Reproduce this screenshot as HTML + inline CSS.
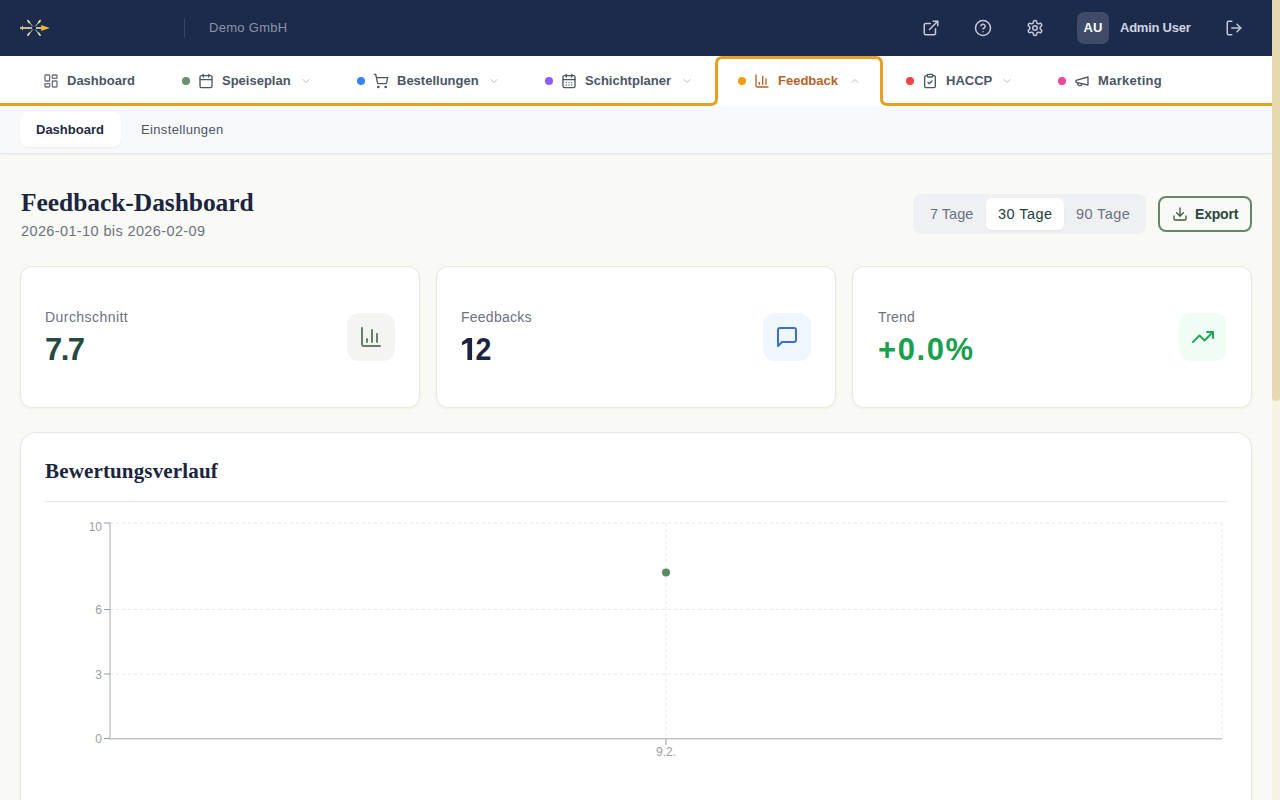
<!DOCTYPE html>
<html lang="de">
<head>
<meta charset="utf-8">
<title>Feedback-Dashboard</title>
<style>
*{box-sizing:border-box;margin:0;padding:0}
html,body{width:1280px;height:800px;overflow:hidden}
body{font-family:"Liberation Sans",sans-serif;background:#f9f9f5;position:relative;color:#1c2540}
.a{position:absolute;white-space:nowrap;line-height:1}
svg{display:block}
#hdr{position:absolute;left:0;top:0;width:1272px;height:56px;background:#1c2a4b}
#nav{position:absolute;left:0;top:56px;width:1272px;height:50px;background:#fff}
#sub{position:absolute;left:0;top:106px;width:1272px;height:48px;background:#f8f9fa;border-bottom:1px solid #e5e7eb;box-shadow:0 1px 3px rgba(0,0,0,0.03)}
.ntxt{font-size:13px;font-weight:700;color:#4b5563}
.dot{position:absolute;width:8px;height:8px;border-radius:50%;top:77px}
.ico{position:absolute;fill:none;stroke-width:2;stroke-linecap:round;stroke-linejoin:round}
.card{position:absolute;top:266px;width:400px;height:142px;background:#fff;border:1px solid #e8e8e1;border-radius:12px;box-shadow:0 1px 3px rgba(40,40,20,0.05)}
.lbl{font-size:14px;color:#6b7280}
.val{font-size:30px;font-weight:700}
.ibox{position:absolute;width:48px;height:48px;border-radius:12px;top:313px}
#scroll{position:absolute;left:1272px;top:0;width:8px;height:800px;background:#f7f2e4}
#thumb{position:absolute;left:1272px;top:0;width:8px;height:401px;background:#e6d9ad;border-radius:0 0 4px 4px}
</style>
</head>
<body>

<!-- HEADER -->
<div id="hdr"></div>
<svg class="a" style="left:16px;top:14px" width="40" height="28" viewBox="16 14 40 28">
  <g stroke="#bfba9c" stroke-width="2" fill="none">
    <line x1="20" y1="28" x2="32" y2="28"/>
    <line x1="36" y1="28" x2="43" y2="28"/>
  </g>
  <g stroke="#c9cba0" stroke-width="1" stroke-linecap="round">
    <line x1="28" y1="20.5" x2="32.4" y2="26"/>
    <line x1="40" y1="20.5" x2="35.6" y2="26"/>
    <line x1="28" y1="35.5" x2="32.4" y2="29.8"/>
    <line x1="40" y1="35.5" x2="35.6" y2="29.8"/>
  </g>
  <g fill="#dadfac">
    <ellipse cx="28.6" cy="21.6" rx="0.9" ry="2.2" transform="rotate(-38 28.6 21.6)"/>
    <ellipse cx="39.4" cy="21.6" rx="0.9" ry="2.2" transform="rotate(38 39.4 21.6)"/>
    <ellipse cx="28.6" cy="34.2" rx="0.9" ry="2.2" transform="rotate(38 28.6 34.2)"/>
    <ellipse cx="39.4" cy="34.2" rx="0.9" ry="2.2" transform="rotate(-38 39.4 34.2)"/>
  </g>
  <path d="M22.5 25.2 L23.6 28 L22.5 30.8 L21.4 28 Z" fill="#d6c46e"/>
  <path d="M41.2 25 L49.8 28 L41.2 31.1 Z" fill="#e6b83c"/>
</svg>
<div class="a" style="left:184px;top:18px;width:1px;height:20px;background:#3a4666"></div>
<div class="a" style="left:209px;top:21px;font-size:13px;letter-spacing:0.3px;color:#8b94a9">Demo GmbH</div>

<!-- header icons -->
<svg class="ico" style="left:922px;top:19px" width="18" height="18" viewBox="0 0 24 24" stroke="#c3c9d6"><path d="M15 3h6v6"/><path d="M10 14 21 3"/><path d="M18 13v6a2 2 0 0 1-2 2H5a2 2 0 0 1-2-2V8a2 2 0 0 1 2-2h6"/></svg>
<svg class="ico" style="left:974px;top:19px" width="18" height="18" viewBox="0 0 24 24" stroke="#c3c9d6"><circle cx="12" cy="12" r="10"/><path d="M9.09 9a3 3 0 0 1 5.83 1c0 2-3 3-3 3"/><path d="M12 17h.01"/></svg>
<svg class="ico" style="left:1026px;top:19px" width="18" height="18" viewBox="0 0 24 24" stroke="#c3c9d6"><path d="M12.22 2h-.44a2 2 0 0 0-2 2v.18a2 2 0 0 1-1 1.73l-.43.25a2 2 0 0 1-2 0l-.15-.08a2 2 0 0 0-2.73.73l-.22.38a2 2 0 0 0 .73 2.73l.15.1a2 2 0 0 1 1 1.72v.51a2 2 0 0 1-1 1.74l-.15.09a2 2 0 0 0-.73 2.73l.22.38a2 2 0 0 0 2.73.73l.15-.08a2 2 0 0 1 2 0l.43.25a2 2 0 0 1 1 1.73V20a2 2 0 0 0 2 2h.44a2 2 0 0 0 2-2v-.18a2 2 0 0 1 1-1.73l.43-.25a2 2 0 0 1 2 0l.15.08a2 2 0 0 0 2.73-.73l.22-.39a2 2 0 0 0-.73-2.73l-.15-.08a2 2 0 0 1-1-1.74v-.5a2 2 0 0 1 1-1.74l.15-.09a2 2 0 0 0 .73-2.73l-.22-.38a2 2 0 0 0-2.73-.73l-.15.08a2 2 0 0 1-2 0l-.43-.25a2 2 0 0 1-1-1.73V4a2 2 0 0 0-2-2z"/><circle cx="12" cy="12" r="3"/></svg>
<div class="a" style="left:1077px;top:12px;width:32px;height:32px;border-radius:7px;background:#3f4b69"></div>
<div class="a" style="left:1077px;top:21px;width:32px;text-align:center;font-size:13px;font-weight:700;color:#fff">AU</div>
<div class="a" style="left:1120px;top:21px;font-size:13px;font-weight:700;letter-spacing:-0.25px;color:#d0d5e0">Admin User</div>
<svg class="ico" style="left:1225px;top:19px" width="18" height="18" viewBox="0 0 24 24" stroke="#c3c9d6"><path d="M9 21H5a2 2 0 0 1-2-2V5a2 2 0 0 1 2-2h4"/><polyline points="16 17 21 12 16 7"/><line x1="21" x2="9" y1="12" y2="12"/></svg>

<!-- NAV -->
<div id="nav"></div>
<svg class="a" style="left:0;top:54px" width="1272" height="54" viewBox="0 54 1272 54">
  <path d="M0 104.5 H710.5 Q716.5 104.5 716.5 98.5 V63.5 Q716.5 57.5 722.5 57.5 H875.5 Q881.5 57.5 881.5 63.5 V98.5 Q881.5 104.5 887.5 104.5 H1272" fill="none" stroke="#e8a020" stroke-width="3"/>
</svg>

<svg class="ico" style="left:43px;top:73px" width="16" height="16" viewBox="0 0 24 24" stroke="#6b7280"><rect width="7" height="9" x="3" y="3" rx="1"/><rect width="7" height="5" x="14" y="3" rx="1"/><rect width="7" height="9" x="14" y="12" rx="1"/><rect width="7" height="5" x="3" y="16" rx="1"/></svg>
<div class="a ntxt" style="left:67px;top:74px">Dashboard</div>

<div class="dot" style="left:182px;background:#6a8f6e"></div>
<svg class="ico" style="left:198px;top:73px" width="16" height="16" viewBox="0 0 24 24" stroke="#4b5563"><rect width="18" height="18" x="3" y="4" rx="2"/><path d="M16 2v4"/><path d="M8 2v4"/><path d="M3 10h18"/></svg>
<div class="a ntxt" style="left:222px;top:74px">Speiseplan</div>
<svg class="ico" style="left:300px;top:75px" width="12" height="12" viewBox="0 0 24 24" stroke="#b4b9c2"><path d="m6 9 6 6 6-6"/></svg>

<div class="dot" style="left:357px;background:#3b82f6"></div>
<svg class="ico" style="left:373px;top:73px" width="16" height="16" viewBox="0 0 24 24" stroke="#4b5563"><circle cx="8" cy="21" r="1"/><circle cx="19" cy="21" r="1"/><path d="M2.05 2.05h2l2.66 12.42a2 2 0 0 0 2 1.58h9.78a2 2 0 0 0 1.95-1.57l1.65-7.43H5.12"/></svg>
<div class="a ntxt" style="left:397px;top:74px">Bestellungen</div>
<svg class="ico" style="left:488px;top:75px" width="12" height="12" viewBox="0 0 24 24" stroke="#b4b9c2"><path d="m6 9 6 6 6-6"/></svg>

<div class="dot" style="left:545px;background:#8b5cf6"></div>
<svg class="ico" style="left:561px;top:73px" width="16" height="16" viewBox="0 0 24 24" stroke="#4b5563"><rect width="18" height="18" x="3" y="4" rx="2"/><path d="M16 2v4"/><path d="M8 2v4"/><path d="M3 10h18"/><path d="M8 14h.01"/><path d="M12 14h.01"/><path d="M16 14h.01"/><path d="M8 18h.01"/><path d="M12 18h.01"/><path d="M16 18h.01"/></svg>
<div class="a ntxt" style="left:585px;top:74px">Schichtplaner</div>
<svg class="ico" style="left:681px;top:75px" width="12" height="12" viewBox="0 0 24 24" stroke="#b4b9c2"><path d="m6 9 6 6 6-6"/></svg>

<div class="dot" style="left:738px;background:#f59e0b"></div>
<svg class="ico" style="left:754px;top:73px" width="16" height="16" viewBox="0 0 24 24" stroke="#b4622a"><path d="M3 3v16a2 2 0 0 0 2 2h16"/><path d="M18 17V9"/><path d="M13 17V5"/><path d="M8 17v-3"/></svg>
<div class="a ntxt" style="left:778px;top:74px;color:#b4622a">Feedback</div>
<svg class="ico" style="left:849px;top:75px" width="12" height="12" viewBox="0 0 24 24" stroke="#b4b9c2"><path d="m18 15-6-6-6 6"/></svg>

<div class="dot" style="left:906px;background:#ef4444"></div>
<svg class="ico" style="left:922px;top:73px" width="16" height="16" viewBox="0 0 24 24" stroke="#4b5563"><rect width="8" height="4" x="8" y="2" rx="1" ry="1"/><path d="M16 4h2a2 2 0 0 1 2 2v14a2 2 0 0 1-2 2H6a2 2 0 0 1-2-2V6a2 2 0 0 1 2-2h2"/><path d="m9 14 2 2 4-4"/></svg>
<div class="a ntxt" style="left:946px;top:74px">HACCP</div>
<svg class="ico" style="left:1001px;top:75px" width="12" height="12" viewBox="0 0 24 24" stroke="#b4b9c2"><path d="m6 9 6 6 6-6"/></svg>

<div class="dot" style="left:1058px;background:#ec4899"></div>
<svg class="ico" style="left:1074px;top:73px" width="16" height="16" viewBox="0 0 24 24" stroke="#4b5563"><path d="m3 11 18-5v12L3 14v-3z"/><path d="M11.6 16.8a3 3 0 1 1-5.8-1.6"/></svg>
<div class="a ntxt" style="left:1098px;top:74px;letter-spacing:0.3px">Marketing</div>

<!-- SUBNAV -->
<div id="sub"></div>
<div class="a" style="left:20px;top:112px;width:101px;height:35px;background:#fff;border-radius:8px;box-shadow:0 1px 2px rgba(0,0,0,0.05)"></div>
<div class="a" style="left:36px;top:123px;font-size:13px;font-weight:700;color:#1f2a44">Dashboard</div>
<div class="a" style="left:141px;top:123px;font-size:13px;letter-spacing:0.35px;color:#4b5563">Einstellungen</div>

<!-- TITLE -->
<div class="a" style="left:21px;top:190px;font-family:'Liberation Serif',serif;font-weight:700;font-size:25.5px;letter-spacing:-0.06px;color:#1c2540">Feedback-Dashboard</div>
<div class="a" style="left:21px;top:224px;font-size:14.5px;letter-spacing:0.38px;color:#6b7280">2026-01-10 bis 2026-02-09</div>

<!-- segmented -->
<div class="a" style="left:913px;top:194px;width:233px;height:40px;background:#eef0f3;border-radius:8px"></div>
<div class="a" style="left:986px;top:198px;width:78px;height:32px;background:#fff;border-radius:6px;box-shadow:0 1px 2px rgba(0,0,0,0.06)"></div>
<div class="a" style="left:930px;top:207px;font-size:14.5px;color:#6b7280">7 Tage</div>
<div class="a" style="left:998px;top:207px;font-size:14.5px;font-weight:400;letter-spacing:0.45px;color:#22403a">30 Tage</div>
<div class="a" style="left:1076px;top:207px;font-size:14.5px;letter-spacing:0.4px;color:#6b7280">90 Tage</div>

<!-- export -->
<div class="a" style="left:1158px;top:196px;width:94px;height:36px;border:2px solid #67876b;border-radius:8px"></div>
<svg class="ico" style="left:1172px;top:206px" width="16" height="16" viewBox="0 0 24 24" stroke="#3b5443"><path d="M21 15v4a2 2 0 0 1-2 2H5a2 2 0 0 1-2-2v-4"/><polyline points="7 10 12 15 17 10"/><line x1="12" x2="12" y1="15" y2="3"/></svg>
<div class="a" style="left:1195px;top:207px;font-size:14px;font-weight:700;letter-spacing:-0.2px;color:#2a4741">Export</div>

<!-- CARDS -->
<div class="card" style="left:20px"></div>
<div class="a lbl" style="left:45px;top:310px;letter-spacing:0.45px">Durchschnitt</div>
<div class="a val" style="left:45px;top:334px;font-size:31px;letter-spacing:-1.6px;color:#264a3f">7.7</div>
<div class="ibox" style="left:347px;background:#f4f5f2"></div>
<svg class="ico" style="left:359px;top:325px" width="24" height="24" viewBox="0 0 24 24" stroke="#667e6a"><path d="M3 3v16a2 2 0 0 0 2 2h16"/><path d="M18 17V9"/><path d="M13 17V5"/><path d="M8 17v-3"/></svg>

<div class="card" style="left:436px"></div>
<div class="a lbl" style="left:461px;top:310px;letter-spacing:0.25px">Feedbacks</div>
<svg class="a" style="left:458px;top:334px" width="20" height="30" viewBox="458 334 20 30"><path d="M467.4 338.1 H472.1 V359.9 H467.4 V342.8 L462 345.3 V341.9 Z" fill="#1c2540"/></svg>
<div class="a val" style="left:474px;top:334px;font-size:31px;color:#1c2540;transform:scaleX(0.92);transform-origin:right center">2</div>
<div class="ibox" style="left:763px;background:#eff6ff"></div>
<svg class="ico" style="left:775px;top:325px" width="24" height="24" viewBox="0 0 24 24" stroke="#3a6fd0"><path d="M21 15a2 2 0 0 1-2 2H7l-4 4V5a2 2 0 0 1 2-2h14a2 2 0 0 1 2 2z"/></svg>

<div class="card" style="left:852px"></div>
<div class="a lbl" style="left:878px;top:310px;letter-spacing:0.2px">Trend</div>
<div class="a val" style="left:878px;top:334px;font-size:31px;letter-spacing:1.6px;color:#17a04d">+0.0%</div>
<div class="ibox" style="left:1179px;background:#f0fdf4"></div>
<svg class="ico" style="left:1191px;top:325px" width="24" height="24" viewBox="0 0 24 24" stroke="#22a55a"><polyline points="22 7 13.5 15.5 8.5 10.5 2 17"/><polyline points="16 7 22 7 22 13"/></svg>

<!-- CHART CARD -->
<div class="a" style="left:20px;top:432px;width:1232px;height:420px;background:#fff;border:1px solid #e6e6df;border-radius:16px;box-shadow:0 1px 3px rgba(40,40,20,0.06)"></div>
<div class="a" style="left:45px;top:461px;font-family:'Liberation Serif',serif;font-weight:700;font-size:21px;letter-spacing:0.15px;color:#1c2540">Bewertungsverlauf</div>
<div class="a" style="left:45px;top:501px;width:1182px;height:1px;background:#e6e6e0"></div>

<svg class="a" style="left:0;top:500px" width="1272" height="280" viewBox="0 500 1272 280">
  <g stroke="#e6e6e6" stroke-width="1" stroke-dasharray="3 3" fill="none">
    <line x1="110" y1="523" x2="1222" y2="523"/>
    <line x1="110" y1="609.5" x2="1222" y2="609.5"/>
    <line x1="110" y1="674" x2="1222" y2="674"/>
    <line x1="666" y1="523" x2="666" y2="738"/>
    <line x1="1222" y1="523" x2="1222" y2="738"/>
  </g>
  <g stroke="#c4c4c4" stroke-width="1.5" fill="none">
    <line x1="110" y1="522.5" x2="110" y2="739"/>
    <line x1="109" y1="738.75" x2="1222" y2="738.75"/>
  </g>
  <g stroke="#9a9a9a" stroke-width="1" fill="none">
    <line x1="104" y1="523" x2="110" y2="523"/>
    <line x1="104" y1="609.5" x2="110" y2="609.5"/>
    <line x1="104" y1="674" x2="110" y2="674"/>
    <line x1="104" y1="738.5" x2="110" y2="738.5"/>
    <line x1="666" y1="739" x2="666" y2="745"/>
  </g>
  <g font-family="Liberation Sans" font-size="12" fill="#9b9ea4" text-anchor="end">
    <text x="102" y="531">10</text>
    <text x="102" y="614">6</text>
    <text x="102" y="678.5">3</text>
    <text x="102" y="743">0</text>
    <text x="666" y="756" text-anchor="middle">9.2.</text>
  </g>
  <circle cx="666" cy="572.6" r="4" fill="#5d8a64"/>
</svg>

<!-- scrollbar -->
<div id="scroll"></div>
<div id="thumb"></div>
</body>
</html>
